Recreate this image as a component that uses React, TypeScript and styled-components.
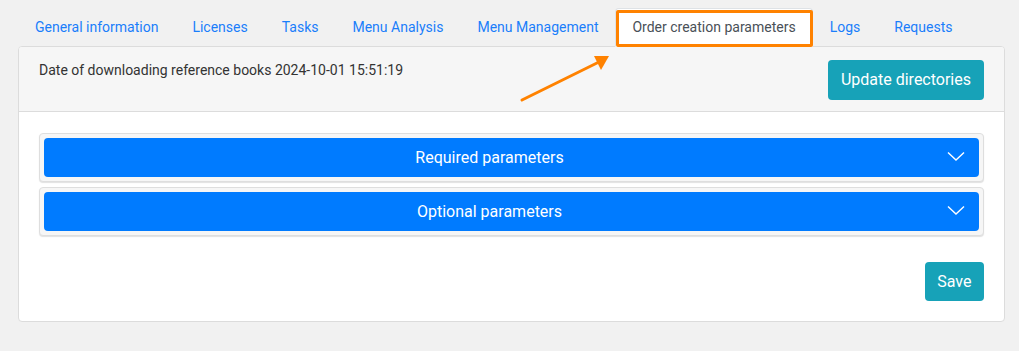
import React from "react";
import styled, { createGlobalStyle } from "styled-components";

const Global = createGlobalStyle`
  html, body { margin: 0; padding: 0; background: #f1f1f1; }
  body { font-family: Roboto, "Liberation Sans", Arial, sans-serif; }
  * { box-sizing: border-box; }
`;

const Page = styled.div`
  position: relative;
  width: 1019px;
  height: 351px;
  padding: 8px 14px 0 18px;
  background: #f1f1f1;
`;

const Tabs = styled.ul`
  display: flex;
  list-style: none;
  margin: 0;
  padding: 0;
  position: relative;
  z-index: 1;
`;

const Tab = styled.li<{ $active?: boolean }>`
  position: relative;
  margin-bottom: -1px;
  padding: 8px 16px;
  line-height: 21px;
  font-size: 14px;
  border: 1px solid ${(p) => (p.$active ? "#dee2e6" : "transparent")};
  border-bottom-color: ${(p) => (p.$active ? "#fff" : "transparent")};
  border-radius: 4px 4px 0 0;
  background: ${(p) => (p.$active ? "#fff" : "transparent")};
  color: ${(p) => (p.$active ? "#495057" : "#1a7efb")};
  white-space: nowrap;
`;

const Highlight = styled.span`
  position: absolute;
  left: 0;
  right: -1px;
  top: 1px;
  bottom: -1px;
  border: 3px solid #ff8200;
  border-radius: 2px;
  pointer-events: none;
`;

const Card = styled.div`
  background: #fff;
  border: 1px solid #dcdcdc;
  border-radius: 4px;
  width: 987px;
  overflow: hidden;
`;

const CardHeader = styled.div`
  display: flex;
  justify-content: space-between;
  align-items: flex-start;
  padding: 13px 20px 11px 20px;
  background: #f6f6f6;
  border-bottom: 1px solid #dcdcdc;
`;

const DateText = styled.div`
  font-size: 14px;
  line-height: 21px;
  color: #333;
`;

const Button = styled.button<{ $h: number; $px: number }>`
  height: ${(p) => p.$h}px;
  padding: 0 ${(p) => p.$px}px;
  border: none;
  border-radius: 4px;
  background: #17a2b8;
  color: #fff;
  font-family: inherit;
  font-size: 16px;
  line-height: 24px;
`;

const CardBody = styled.div`
  display: flex;
  flex-direction: column;
  padding: 21px 20px 20px 20px;
`;

const Accordion = styled.div`
  display: flex;
  flex-direction: column;
  gap: 5px;
`;

const AccItem = styled.div`
  padding: 4px;
  background: #f6f6f6;
  border: 1px solid #dedede;
  border-radius: 4px;
  box-shadow: 0 1px 1px rgba(0, 0, 0, 0.12);
`;

const AccHeader = styled.div`
  position: relative;
  display: flex;
  align-items: center;
  justify-content: center;
  height: 39px;
  padding-right: 44px;
  background: #007bff;
  border-radius: 4px;
  color: #fff;
  font-size: 16px;
`;

const Chevron = styled.svg`
  position: absolute;
  right: 14px;
  top: 13px;
`;

const Footer = styled.div`
  display: flex;
  justify-content: flex-end;
  margin-top: 26px;
`;

const Arrow = styled.svg`
  position: absolute;
  left: 515px;
  top: 50px;
  pointer-events: none;
  z-index: 2;
`;

const tabs = [
  "General information",
  "Licenses",
  "Tasks",
  "Menu Analysis",
  "Menu Management",
  "Order creation parameters",
  "Logs",
  "Requests",
];

function Item({ title }: { title: string }) {
  return (
    <AccItem>
      <AccHeader>
        {title}
        <Chevron width="18" height="11" viewBox="0 0 18 11">
          <path d="M1 1.5 L9 9 L17 1.5" fill="none" stroke="#fff" strokeWidth="1.4" />
        </Chevron>
      </AccHeader>
    </AccItem>
  );
}

export default function App() {
  return (
    <>
      <Global />
      <Page>
        <Tabs>
          {tabs.map((t) => (
            <Tab key={t} $active={t === "Order creation parameters"}>
              {t}
              {t === "Order creation parameters" && <Highlight />}
            </Tab>
          ))}
        </Tabs>
        <Card>
          <CardHeader>
            <DateText>Date of downloading reference books 2024-10-01 15:51:19</DateText>
            <Button $h={40} $px={13}>Update directories</Button>
          </CardHeader>
          <CardBody>
            <Accordion>
              <Item title="Required parameters" />
              <Item title="Optional parameters" />
            </Accordion>
            <Footer>
              <Button $h={39} $px={12.5}>Save</Button>
            </Footer>
          </CardBody>
        </Card>
        <Arrow width="100" height="56" viewBox="0 0 100 56">
          <line x1="7" y1="50" x2="84" y2="12" stroke="#ff8200" strokeWidth="3" strokeLinecap="round" />
          <polygon points="94,6 79,6 86,20" fill="#ff8200" />
        </Arrow>
      </Page>
    </>
  );
}
